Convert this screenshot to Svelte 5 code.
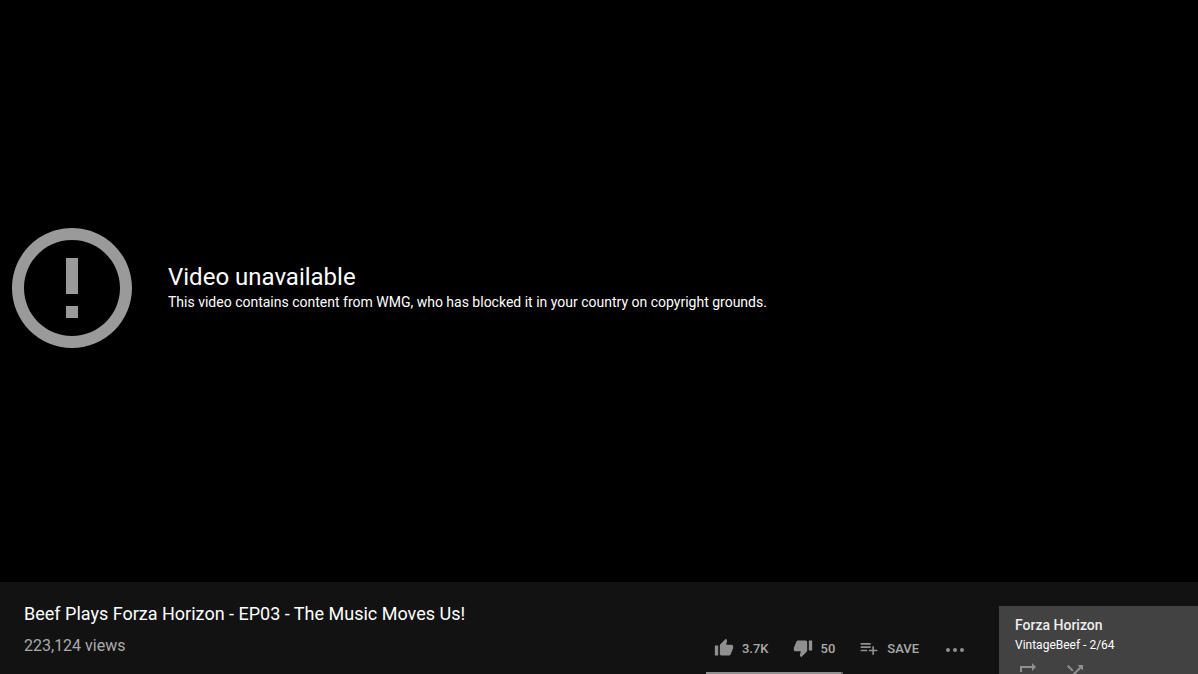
<script lang="ts">
  // Dark watch page: blocked player on top, video info and the playlist panel below.
  const video = {
    title: "Beef Plays Forza Horizon - EP03 - The Music Moves Us!",
    views: "223,124 views",
    likes: "3.7K",
    dislikes: "50",
  };
  const playlist = { title: "Forza Horizon", owner: "VintageBeef", index: 2, total: 64 };
  const likeShare = 98;
</script>

<div class="page">
  <section class="player" aria-label="Video player">
    <svg class="alert" viewBox="0 0 24 24" aria-hidden="true">
      <path d="M11 15h2v2h-2v-2zm0-8h2v6h-2V7zm1-5C6.48 2 2 6.48 2 12s4.48 10 10 10 10-4.48 10-10S17.52 2 12 2zm0 18c-4.42 0-8-3.58-8-8s3.58-8 8-8 8 3.58 8 8-3.58 8-8 8z" />
    </svg>
    <div class="message">
      <h2>Video unavailable</h2>
      <p>This video contains content from WMG, who has blocked it in your country on copyright grounds.</p>
    </div>
  </section>

  <div class="below">
    <main>
      <h1>{video.title}</h1>
      <div class="info">
        <span class="views">{video.views}</span>
        <div class="actions">
          <div class="sentiment">
            <div class="votes">
              <button type="button" aria-label="Like">
                <svg viewBox="0 0 24 24" aria-hidden="true"><path d="M1 21h4V9H1v12zm22-11c0-1.1-.9-2-2-2h-6.31l.95-4.57.03-.32c0-.41-.17-.79-.44-1.06L14.17 1 7.59 7.59C7.22 7.95 7 8.45 7 9v10c0 1.1.9 2 2 2h9c.83 0 1.54-.5 1.84-1.22l3.02-7.05c.09-.23.14-.47.14-.73v-2z" /></svg>
                <span>{video.likes}</span>
              </button>
              <button type="button" aria-label="Dislike">
                <svg viewBox="0 0 24 24" aria-hidden="true"><path d="M15 3H6c-.83 0-1.54.5-1.84 1.22l-3.02 7.05c-.09.23-.14.47-.14.73v2c0 1.1.9 2 2 2h6.31l-.95 4.57-.03.32c0 .41.17.79.44 1.06L9.83 23l6.59-6.59c.36-.36.58-.86.58-1.41V5c0-1.1-.9-2-2-2zm4 0v12h4V3h-4z" /></svg>
                <span>{video.dislikes}</span>
              </button>
            </div>
            <div class="bar"><div class="fill" style="width:{likeShare}%"></div></div>
          </div>
          <button type="button">
            <svg viewBox="0 0 24 24" aria-hidden="true"><path d="M14 10H2v2h12v-2zm0-4H2v2h12V6zm4 8v-4h-2v4h-4v2h4v4h2v-4h4v-2h-4zM2 16h8v-2H2v2z" /></svg>
            <span>SAVE</span>
          </button>
          <button type="button" aria-label="More actions">
            <svg class="dots" viewBox="0 0 24 24" aria-hidden="true">
              <circle cx="5" cy="14" r="2" /><circle cx="12" cy="14" r="2" /><circle cx="19" cy="14" r="2" />
            </svg>
          </button>
        </div>
      </div>
    </main>

    <aside aria-label="Playlist">
      <h3>{playlist.title}</h3>
      <p>{playlist.owner} - {playlist.index}/{playlist.total}</p>
      <div class="controls">
        <button type="button" aria-label="Loop playlist">
          <svg viewBox="0 0 24 24" aria-hidden="true"><path d="M7 7h10v3l4-4-4-4v3H5v6h2V7zm10 10H7v-3l-4 4 4 4v-3h12v-6h-2v4z" /></svg>
        </button>
        <button type="button" aria-label="Shuffle playlist">
          <svg viewBox="0 0 24 24" aria-hidden="true"><path d="M10.59 9.17L5.41 4 4 5.41l5.17 5.17 1.42-1.41zM14.5 4l2.04 2.04L4 18.59 5.41 20 17.96 7.46 20 9.5V4h-5.5zm.33 9.41l-1.41 1.41 3.13 3.13L14.5 20H20v-5.5l-2.04 2.04-3.13-3.13z" /></svg>
        </button>
      </div>
    </aside>
  </div>
</div>

<style>
  :global(body) { background: #121212; }

  .page {
    height: 100vh; display: flex; flex-direction: column; overflow: hidden;
    background: #121212; color: #fff; font-family: Roboto, "Liberation Sans", sans-serif;
  }
  h1, h2, h3, p { margin: 0; font-weight: 400; }
  svg { display: block; fill: #909090; }
  button { display: flex; align-items: center; border: none; background: none; font: inherit; color: inherit; cursor: pointer; }

  .player { flex: 1; display: flex; align-items: center; padding-bottom: 6px; background: #000; }
  .alert { flex: none; width: 144px; height: 144px; margin-right: 24px; fill: #9a9a9a; }
  .message { padding-bottom: 2px; }
  .message h2 { font-size: 24px; line-height: 30px; }
  .message p { font-size: 14px; line-height: 20px; }

  /* Only the top of this strip shows; the rest runs past the fold. */
  .below { flex: none; height: 92px; display: flex; align-items: flex-start; }
  main { flex: 1; min-width: 0; padding: 20px 24px 0; }
  h1 { font-size: 18px; line-height: 24px; }
  .info { display: flex; align-items: flex-start; justify-content: space-between; padding-top: 4px; }
  .views { padding-top: 4px; font-size: 16px; line-height: 24px; color: #aaa; }

  .actions { display: flex; align-items: flex-start; gap: 8px; font-size: 13px; font-weight: 500; color: #aaa; }
  .actions button { height: 36px; gap: 8px; padding: 0 8px; }
  .actions svg { width: 20px; height: 20px; }
  .actions .dots { width: 24px; height: 24px; }
  .votes { display: flex; gap: 8px; }
  .bar { height: 2px; margin-top: 6px; background: #606060; }
  .fill { height: 2px; background: #909090; }

  aside { width: 167px; margin-top: 24px; padding: 8px 16px; background: #424242; }
  h3 { font-size: 14px; line-height: 22px; font-weight: 500; color: #eee; }
  aside p { font-size: 12px; line-height: 18px; }
  .controls { display: flex; gap: 24px; padding-top: 7px; }
  .controls button { padding: 0; }
  .controls svg { width: 24px; height: 24px; }
</style>
